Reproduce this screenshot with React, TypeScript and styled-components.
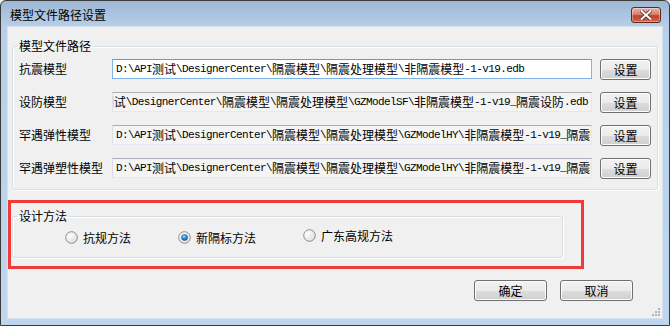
import React, { useId } from 'react'
import styled, { createGlobalStyle } from 'styled-components'

const GlobalStyle = createGlobalStyle`
  html, body {
    margin: 0;
    padding: 0;
    background: #f0f0f0;
  }
  body {
    font-family: "Noto Sans CJK SC", "Liberation Sans", sans-serif;
    font-size: 12px;
    color: #000;
  }
`

const UI_FONT = `"Noto Sans CJK SC", "Liberation Sans", sans-serif`

const Window = styled.div`
  position: relative;
  box-sizing: border-box;
  width: 670px;
  height: 326px;
  display: flex;
  flex-direction: column;
  border: 1px solid #3a3a3a;
  border-radius: 6px 6px 0 0;
  background: linear-gradient(180deg, #9db7d4 0px, #b7cfe8 26px, #bfd6ee 100%);
  padding: 0 6px 6px;
`

const TitleBar = styled.div`
  height: 25px;
  display: flex;
  align-items: center;
  justify-content: space-between;
  padding: 0 2px 0 3px;
`

const Title = styled.span`
  font-family: ${UI_FONT};
  font-size: 12px;
  color: #000;
  margin-top: 1px;
`

const CloseButton = styled.div`
  box-sizing: border-box;
  width: 30px;
  height: 16px;
  margin-top: 3px;
  border: 1px solid #5b2a22;
  border-radius: 3px;
  background: linear-gradient(180deg, #eab2a6 0%, #d8826f 45%, #c2432b 55%, #d0664a 100%);
  box-shadow: inset 0 0 0 1px rgba(255, 255, 255, 0.35);
  display: flex;
  align-items: center;
  justify-content: center;
`

const Client = styled.div`
  position: relative;
  flex: 1;
  display: flex;
  flex-direction: column;
  background: #f0f0f0;
  border: 1px solid #d6e2ee;
`

const Group = styled.fieldset`
  box-sizing: border-box;
  margin: 0;
  padding: 0;
  min-width: 0;
  border: 1px solid #d5dfe5;
  border-radius: 3px;
  box-shadow: inset 1px 1px 0 #fff, 1px 1px 0 #fff;
`

const PathGroup = styled(Group)`
  margin: 11px 4px 0 4px;
`

const MethodGroup = styled(Group)`
  width: 551px;
`

const Legend = styled.legend`
  margin-left: 4px;
  padding: 0 2px;
  font-family: ${UI_FONT};
  font-size: 12px;
  line-height: 16px;
`

const Rows = styled.div`
  display: grid;
  grid-template-columns: 93px 488px 51px;
  row-gap: 12px;
  padding: 5px 6px 10px 6px;
`

const FieldLabel = styled.span`
  font-family: ${UI_FONT};
  font-size: 12px;
  line-height: 20px;
  white-space: nowrap;
`

const PathBox = styled.div<{ $focused?: boolean; $alignEnd?: boolean }>`
  box-sizing: border-box;
  min-width: 0;
  height: 20px;
  margin-right: 8px;
  display: flex;
  align-items: center;
  justify-content: ${(p) => (p.$alignEnd ? 'flex-end' : 'flex-start')};
  overflow: hidden;
  white-space: nowrap;
  padding: 0 3px;
  background: ${(p) => (p.$focused ? '#ffffff' : '#f4f4f4')};
  border: 1px solid ${(p) => (p.$focused ? '#7eb4ea' : '#e3e9ef')};
  border-top-color: ${(p) => (p.$focused ? '#569de5' : '#abadb3')};
  border-left-color: ${(p) => (p.$focused ? '#7eb4ea' : '#dbdfe6')};
`

const Run = styled.span<{ $cjk: boolean }>`
  flex: none;
  font-family: ${(p) =>
    p.$cjk ? `"Noto Sans CJK SC", sans-serif` : `"Liberation Mono", monospace`};
  font-size: ${(p) => (p.$cjk ? '12px' : '11px')};
  letter-spacing: ${(p) => (p.$cjk ? '0' : '-0.6px')};
  line-height: 16px;
`

const Button = styled.button<{ $wide?: boolean }>`
  box-sizing: border-box;
  width: ${(p) => (p.$wide ? '73px' : '51px')};
  height: 21px;
  padding: 0;
  margin: 0;
  border: 1px solid #707070;
  border-radius: 3px;
  background: linear-gradient(180deg, #f2f2f2 0%, #ebebeb 50%, #dddddd 51%, #cfcfcf 100%);
  box-shadow: inset 0 0 0 1px #fcfcfc;
  font-family: ${UI_FONT};
  font-size: 12px;
  line-height: 19px;
  color: #000;
`

const Highlight = styled.div`
  box-sizing: border-box;
  width: 576px;
  margin-top: 10px;
  border: 3px solid #f03a3a;
  padding: 5px 0 8px 1px;
`

const RadioRow = styled.div`
  display: flex;
  align-items: center;
  gap: 47px;
  padding: 7px 0 13px 52px;
`

const RadioItem = styled.label<{ $lift?: number }>`
  display: flex;
  align-items: center;
  gap: 5px;
  font-family: ${UI_FONT};
  font-size: 12px;
  line-height: 13px;
  transform: translateY(${(p) => -(p.$lift ?? 0)}px);
`

const Footer = styled.div`
  display: flex;
  justify-content: flex-end;
  gap: 13px;
  margin-top: 11px;
  padding-right: 29px;
`

const Grip = styled.svg`
  position: absolute;
  right: 1px;
  bottom: 1px;
`

const Radio: React.FC<{ checked?: boolean }> = ({ checked }) => {
  const id = useId().replace(/:/g, '')
  return (
    <svg width="13" height="13" viewBox="0 0 13 13">
      <defs>
        <radialGradient id={`f${id}`} cx="0.35" cy="0.35" r="0.75">
          <stop offset="0" stopColor="#ffffff" />
          <stop offset="0.6" stopColor="#e6e6e6" />
          <stop offset="1" stopColor="#c9c9c9" />
        </radialGradient>
        <radialGradient id={`d${id}`} cx="0.4" cy="0.3" r="0.8">
          <stop offset="0" stopColor="#9fe0ff" />
          <stop offset="0.5" stopColor="#2c8bd0" />
          <stop offset="1" stopColor="#0b4f8a" />
        </radialGradient>
      </defs>
      <circle cx="6.5" cy="6.5" r="5.8" fill={`url(#f${id})`} stroke="#8f8f8f" strokeWidth="1" />
      <circle cx="6.5" cy="6.5" r="4.3" fill="none" stroke="#f4f4f4" strokeWidth="0.8" />
      {checked && <circle cx="6.5" cy="6.5" r="3" fill={`url(#d${id})`} stroke="#1b4f80" strokeWidth="0.6" />}
    </svg>
  )
}

const PathText: React.FC<{ text: string }> = ({ text }) => {
  const runs = text.match(/[\u3000-\u9fff\uff00-\uffef]+|[^\u3000-\u9fff\uff00-\uffef]+/g) || []
  return (
    <>
      {runs.map((r, i) => (
        <Run key={i} $cjk={/[\u3000-\u9fff\uff00-\uffef]/.test(r)}>
          {r}
        </Run>
      ))}
    </>
  )
}

const base = 'D:\\API测试\\DesignerCenter\\隔震模型\\隔震处理模型\\'

const paths = [
  { label: '抗震模型', value: base + '非隔震模型-1-v19.edb', focused: true },
  { label: '设防模型', value: base + 'GZModelSF\\非隔震模型-1-v19_隔震设防.edb', alignEnd: true },
  { label: '罕遇弹性模型', value: base + 'GZModelHY\\非隔震模型-1-v19_隔震弹性.edb' },
  { label: '罕遇弹塑性模型', value: base + 'GZModelHY\\非隔震模型-1-v19_隔震弹塑性.edb' },
]

const methods = [
  { label: '抗规方法', checked: false, lift: 0 },
  { label: '新隔标方法', checked: true, lift: 0 },
  { label: '广东高规方法', checked: false, lift: 2 },
]

const App: React.FC = () => {
  return (
    <>
      <GlobalStyle />
      <Window>
        <TitleBar>
          <Title>模型文件路径设置</Title>
          <CloseButton>
            <svg width="12" height="10" viewBox="0 0 12 10">
              <path d="M1.5 1 L10.5 9 M10.5 1 L1.5 9" stroke="#4a2a26" strokeWidth="3.4" strokeLinecap="square" />
              <path d="M1.5 1 L10.5 9 M10.5 1 L1.5 9" stroke="#ffffff" strokeWidth="2" strokeLinecap="square" />
            </svg>
          </CloseButton>
        </TitleBar>
        <Client>
          <PathGroup>
            <Legend>模型文件路径</Legend>
            <Rows>
              {paths.map((p) => (
                <React.Fragment key={p.label}>
                  <FieldLabel>{p.label}</FieldLabel>
                  <PathBox $focused={p.focused} $alignEnd={p.alignEnd}>
                    <PathText text={p.value} />
                  </PathBox>
                  <Button>设置</Button>
                </React.Fragment>
              ))}
            </Rows>
          </PathGroup>

          <Highlight>
            <MethodGroup>
              <Legend>设计方法</Legend>
              <RadioRow>
                {methods.map((m) => (
                  <RadioItem key={m.label} $lift={m.lift}>
                    <Radio checked={m.checked} />
                    {m.label}
                  </RadioItem>
                ))}
              </RadioRow>
            </MethodGroup>
          </Highlight>

          <Footer>
            <Button $wide>确定</Button>
            <Button $wide>取消</Button>
          </Footer>

          <Grip width="10" height="10" viewBox="0 0 10 10">
            {[
              [7, 1], [7, 4], [4, 4], [7, 7], [4, 7], [1, 7],
            ].map(([x, y]) => (
              <rect key={`${x}-${y}`} x={x} y={y} width="2" height="2" fill="#b5b5b5" />
            ))}
          </Grip>
        </Client>
      </Window>
    </>
  )
}

export default App
